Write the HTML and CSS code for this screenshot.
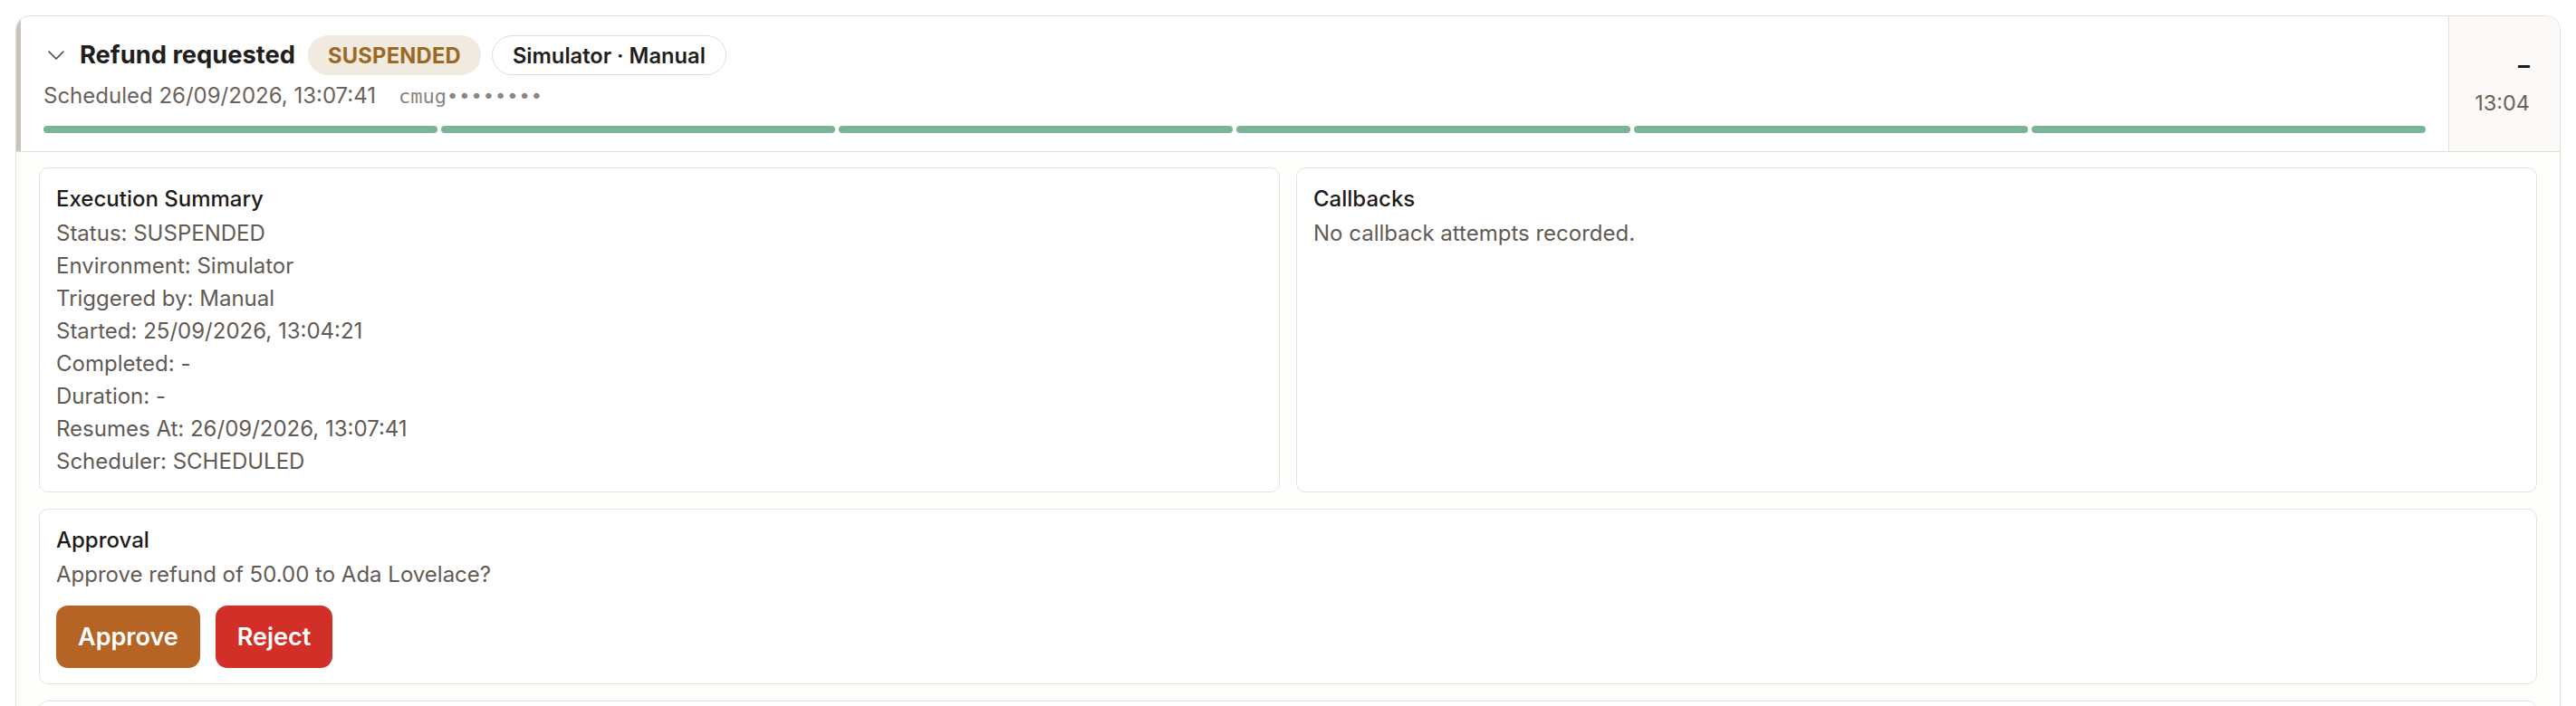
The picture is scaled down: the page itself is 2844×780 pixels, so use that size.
FILE: index.html
```html
<!DOCTYPE html>
<html lang="en">
<head>
<meta charset="utf-8">
<title>Refund requested</title>
<link rel="stylesheet" href="styles.css">
</head>
<body>
<div class="run-card">
  <div class="run-header">
    <div class="run-main">
      <div class="title-row">
        <svg class="chevron" width="18" height="10" viewBox="0 0 18 10" aria-hidden="true"><polyline points="1,1 9,9 17,1" fill="none" stroke="#4a433d" stroke-width="1.6" stroke-linecap="round" stroke-linejoin="round"/></svg>
        <h1 class="run-title">Refund requested</h1>
        <span class="pill pill-status">SUSPENDED</span>
        <span class="pill pill-env">Simulator · Manual</span>
      </div>
      <div class="sub-row">
        <span class="scheduled">Scheduled 26/09/2026, 13:07:41</span>
        <span class="run-id">cmug••••••••</span>
      </div>
      <div class="progress">
        <span class="seg"></span><span class="seg"></span><span class="seg"></span><span class="seg"></span><span class="seg"></span><span class="seg"></span>
      </div>
    </div>
    <div class="run-side">
      <span class="side-dash">–</span>
      <span class="side-time">13:04</span>
    </div>
  </div>
  <div class="run-body">
    <div class="grid-two">
      <section class="panel">
        <h2 class="panel-title">Execution Summary</h2>
        <div class="panel-line">Status: SUSPENDED</div>
        <div class="panel-line">Environment: Simulator</div>
        <div class="panel-line">Triggered by: Manual</div>
        <div class="panel-line">Started: 25/09/2026, 13:04:21</div>
        <div class="panel-line">Completed: -</div>
        <div class="panel-line">Duration: -</div>
        <div class="panel-line">Resumes At: 26/09/2026, 13:07:41</div>
        <div class="panel-line">Scheduler: SCHEDULED</div>
      </section>
      <section class="panel">
        <h2 class="panel-title">Callbacks</h2>
        <div class="panel-line">No callback attempts recorded.</div>
      </section>
    </div>
    <section class="panel approval">
      <h2 class="panel-title">Approval</h2>
      <div class="panel-line">Approve refund of 50.00 to Ada Lovelace?</div>
      <div class="actions">
        <button class="btn btn-approve" type="button">Approve</button>
        <button class="btn btn-reject" type="button">Reject</button>
      </div>
    </section>
    <section class="panel panel-next" aria-hidden="true"></section>
  </div>
</div>
</body>
</html>
```

FILE: styles.css
```css
* { box-sizing: border-box; }

html, body {
  margin: 0;
  background: #ffffff;
}

body {
  padding: 17px 17px 0;
  font-family: Inter, "Noto Sans", sans-serif;
  color: #221e1b;
}

.run-card {
  border: 1px solid #e4e0d9;
  border-radius: 16px;
  overflow: hidden;
  background: #ffffff;
}

.run-header {
  display: flex;
  border-bottom: 1px solid #e4e0d9;
}

.run-main {
  flex: 1;
  min-width: 0;
  border-left: 5px solid #c8c3bb;
  padding: 21px 25px 20px;
}

.title-row {
  display: flex;
  align-items: center;
  height: 44px;
}

.chevron {
  margin-left: 5px;
  margin-right: 17px;
  flex: none;
}

.run-title {
  margin: 0 14px 0 0;
  font-size: 27.3px;
  font-weight: 700;
  line-height: 34px;
  color: #221e1b;
}

.pill {
  display: inline-flex;
  align-items: center;
  height: 44px;
  padding: 0 22px;
  border-radius: 22px;
  font-size: 23.7px;
  white-space: nowrap;
}

.pill-status {
  background: #f1eadf;
  color: #9a6926;
  font-weight: 700;
  letter-spacing: 0.01em;
  margin-right: 12px;
}

.pill-env {
  border: 1px solid #e1dcd5;
  background: #ffffff;
  color: #221e1b;
  font-weight: 600;
}

.sub-row {
  display: flex;
  align-items: baseline;
  gap: 25px;
  margin-top: 6px;
  height: 34px;
  line-height: 34px;
}

.scheduled {
  font-size: 24px;
  color: #6b625b;
}

.run-id {
  font-family: "DejaVu Sans Mono", "Liberation Mono", monospace;
  font-size: 22px;
  color: #8b857f;
}

.progress {
  display: flex;
  gap: 4px;
  margin-top: 16px;
}

.seg {
  flex: 1;
  height: 8px;
  border-radius: 4px;
  background: #7ab597;
}

.run-side {
  width: 123px;
  flex: none;
  border-left: 1px solid #e4e0d9;
  background: #fbfaf8;
  display: flex;
  flex-direction: column;
  align-items: flex-end;
  justify-content: center;
  gap: 8px;
  padding-right: 33px;
}

.side-dash {
  font-size: 26px;
  font-weight: 700;
  line-height: 34px;
  color: #1d1a17;
}

.side-time {
  font-size: 23.5px;
  line-height: 34px;
  color: #6b625b;
}

.run-body {
  padding: 17px 25px 24px;
  display: flex;
  flex-direction: column;
  gap: 18px;
  background: #fefefd;
}

.grid-two {
  display: grid;
  grid-template-columns: 1fr 1fr;
  gap: 18px;
}

.panel {
  border: 1px solid #e6e2dc;
  border-radius: 10px;
  background: #ffffff;
  padding: 17px 18px 15px;
}

.panel-next {
  min-height: 160px;
}

.panel-title {
  margin: 0 0 4px;
  font-size: 24px;
  font-weight: 500;
  line-height: 33px;
  color: #1f1b18;
}

.panel-line {
  font-size: 24px;
  line-height: 36px;
  color: #625a53;
}

.approval {
  padding-bottom: 17px;
}

.actions {
  display: flex;
  gap: 17px;
  margin-top: 16px;
}

.btn {
  height: 69px;
  padding: 0 24px;
  border: none;
  border-radius: 13px;
  font-family: Inter, "Noto Sans", sans-serif;
  font-size: 27px;
  font-weight: 600;
  color: #ffffff;
  cursor: pointer;
}

.btn-approve { background: #b56426; }
.btn-reject { background: #d12f27; }
```
